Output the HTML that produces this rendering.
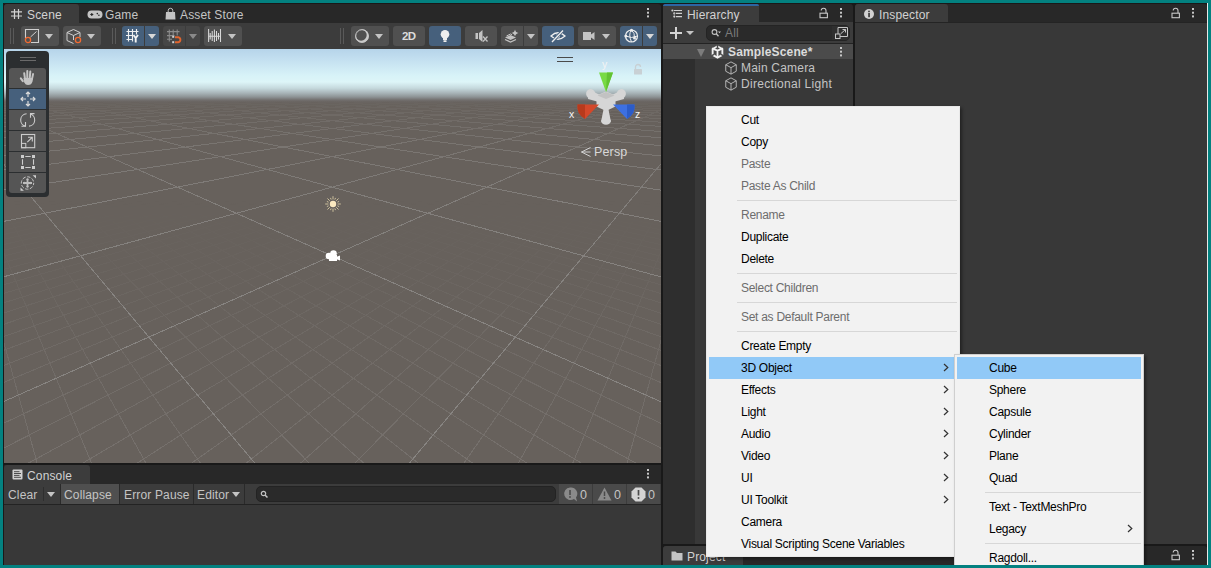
<!DOCTYPE html>
<html><head><meta charset="utf-8">
<style>
*{box-sizing:border-box;margin:0;padding:0}
html,body{width:1211px;height:568px;overflow:hidden;background:#038180;font-family:"Liberation Sans",sans-serif;font-size:12px;color:#c4c4c4}
.a{position:absolute}
svg{position:absolute;overflow:visible}
#ed{position:absolute;left:3px;top:3px;width:1205px;height:562px;background:#191919}
.hdr{position:absolute;background:#282828}
.tab{position:absolute;background:#3c3c3c;border-radius:3px 3px 0 0}
.tt{position:absolute;white-space:nowrap;line-height:14px;letter-spacing:0.15px}
.tb{position:absolute;background:#3c3c3c}
.btn{position:absolute;background:#505050;border-radius:3px}
.blue{background:#46607c}
.dd{position:absolute;width:0;height:0;border-left:4px solid transparent;border-right:4px solid transparent;border-top:5px solid #c4c4c4}
.mi{position:absolute;left:0;width:100%;height:22px;line-height:22px;padding-left:35px;color:#000;white-space:nowrap;font-size:12px;letter-spacing:-0.28px}
.mi.g{color:#6d6d6d}
.sep{position:absolute;height:1px;background:#d7d7d7}
.dots{position:absolute;width:2px;height:10px;background:radial-gradient(circle,#c4c4c4 0.9px,transparent 1.1px) 0 0/2px 4px repeat-y}
.pb{position:absolute;left:9px;width:37px;height:20px;background:#555555}
</style></head><body>
<div id="ed"></div>

<!-- ===== SCENE PANEL ===== -->
<div class="hdr" style="left:4px;top:4px;width:657px;height:19px;border-radius:3px 3px 0 0"></div>
<div class="tab" style="left:4px;top:4px;width:75px;height:19px"></div>
<svg style="left:11px;top:9px" width="11" height="10" viewBox="0 0 11 10"><path d="M3.5 0V10M7.5 0V10M0 2.8H11M0 7H11" stroke="#d2d2d2" stroke-width="1.2" fill="none"/></svg>
<div class="tt" style="left:27px;top:8px;color:#d2d2d2">Scene</div>
<svg style="left:88px;top:10px" width="14" height="9" viewBox="0 0 14 9"><path d="M3.5 0.5H10.5A3.8 3.8 0 0 1 10.5 8.5H3.5A3.8 3.8 0 0 1 3.5 0.5Z" fill="#c4c4c4"/><path d="M2.3 4.5H5.3M3.8 3V6" stroke="#282828" stroke-width="1.1"/><circle cx="9.3" cy="3.6" r="0.8" fill="#282828"/><circle cx="10.9" cy="5.3" r="0.8" fill="#282828"/></svg>
<div class="tt" style="left:105px;top:8px">Game</div>
<svg style="left:165px;top:8px" width="11" height="12" viewBox="0 0 11 12"><path d="M3.2 4.5V2.6A2.3 2.3 0 0 1 7.8 2.6V4.5" stroke="#c4c4c4" stroke-width="1" fill="none"/><path d="M1 4H10L10.5 11.5H0.5Z" fill="#c4c4c4"/></svg>
<div class="tt" style="left:180px;top:8px">Asset Store</div>
<svg style="left:647px;top:8.3px" width="2" height="10" viewBox="0 0 2 10"><rect x="0" y="0" width="2" height="2" fill="#c8c8c8"/><rect x="0" y="3.7" width="2" height="2" fill="#c8c8c8"/><rect x="0" y="7.4" width="2" height="2" fill="#c8c8c8"/></svg>

<div class="tb" style="left:4px;top:23px;width:657px;height:26px"></div>
<!-- left toolbar -->
<div class="a" style="left:10px;top:28px;width:1px;height:16px;background:#5a5a5a"></div>
<div class="a" style="left:13px;top:28px;width:1px;height:16px;background:#5a5a5a"></div>
<div class="btn" style="left:21px;top:26px;width:38px;height:20px"></div>
<svg style="left:24px;top:28px" width="18" height="18" viewBox="0 0 18 18"><path d="M1.5 10V1.5H14.5V14.5H7" stroke="#d0d0d0" stroke-width="1.1" fill="none"/><path d="M6.5 9L12.5 3.5" stroke="#d0d0d0" stroke-width="1"/><circle cx="4" cy="12" r="2.6" stroke="#f26b32" stroke-width="1.3" fill="none"/></svg>
<div class="dd" style="left:45px;top:34px"></div>
<div class="btn" style="left:63px;top:26px;width:38px;height:20px"></div>
<svg style="left:66px;top:28px" width="18" height="18" viewBox="0 0 18 18"><path d="M1 4.5L7.5 1.5L14 4.5V9M1 4.5V12.5L7.5 15.5M1 4.5L7.5 7.5L14 4.5M7.5 7.5V12" stroke="#d0d0d0" stroke-width="1" fill="none"/><circle cx="12" cy="12" r="2.6" stroke="#f26b32" stroke-width="1.3" fill="none"/></svg>
<div class="dd" style="left:87px;top:34px"></div>
<div class="a" style="left:112px;top:28px;width:1px;height:16px;background:#5a5a5a"></div>
<div class="a" style="left:115px;top:28px;width:1px;height:16px;background:#5a5a5a"></div>
<div class="btn blue" style="left:122px;top:26px;width:22px;height:20px;border-radius:3px 0 0 3px"></div>
<div class="btn blue" style="left:145px;top:26px;width:14px;height:20px;border-radius:0 3px 3px 0"></div>
<svg style="left:122px;top:26px" width="22" height="20" viewBox="0 0 22 20"><g stroke="#f0f0f0" stroke-width="1.15" fill="none"><path d="M6.5 3V15.5M10.5 3V15.5M14.5 3V8.5M4.5 5.5H16.5M4 9.5H10.5M4.5 13.5H11"/></g><path d="M11.5 9L13.7 12L16 9M13.7 12V16.5" stroke="#f4f4f4" stroke-width="1.9" fill="none"/></svg>
<div class="dd" style="left:148px;top:34px;border-top-color:#d8d8d8"></div>
<div class="btn" style="left:163px;top:26px;width:22px;height:20px;border-radius:3px 0 0 3px;background:#464646"></div>
<div class="btn" style="left:186px;top:26px;width:14px;height:20px;border-radius:0 3px 3px 0;background:#464646"></div>
<svg style="left:163px;top:26px" width="22" height="20" viewBox="0 0 22 20"><g stroke="#8c8c8c" stroke-width="1.05" fill="none"><path d="M6.3 3.5V15.5M10.2 3.5V9.5M14.2 3.5V9.5M4 5.6H16.5M4 9.6H11.5M4 13.2H9"/></g><rect x="9.2" y="9.8" width="2" height="2" fill="#d0d0d0"/><rect x="9.2" y="15.2" width="2" height="2" fill="#d0d0d0"/><path d="M12 11.2H15.3A2.6 2.6 0 0 1 15.3 16.3H12" stroke="#e0652f" stroke-width="1.9" fill="none"/></svg>
<div class="dd" style="left:189px;top:34px;border-top-color:#8a8a8a"></div>
<div class="btn" style="left:204px;top:26px;width:38px;height:20px"></div>
<svg style="left:204px;top:26px" width="22" height="20" viewBox="0 0 22 20"><g stroke="#d8d8d8" stroke-width="1.05" fill="none"><path d="M4.6 3V16M16.5 3V16M4.6 10.2H16.5M6.2 7V13.5M8.2 5V15M10.4 3.5V16M12.5 5V15M14.5 7V13.5"/></g></svg>
<div class="dd" style="left:228px;top:34px"></div>

<!-- right toolbar -->
<div class="a" style="left:340px;top:28px;width:1px;height:16px;background:#5a5a5a"></div>
<div class="a" style="left:343px;top:28px;width:1px;height:16px;background:#5a5a5a"></div>
<div class="btn" style="left:351px;top:26px;width:38px;height:20px"></div>
<svg style="left:354px;top:28px" width="16" height="16" viewBox="0 0 16 16"><circle cx="8" cy="8" r="6.8" fill="#cacaca"/><circle cx="7.1" cy="7.1" r="5.6" fill="#505050"/><circle cx="8" cy="8" r="6.3" stroke="#cacaca" stroke-width="1" fill="none"/></svg>
<div class="dd" style="left:375px;top:34px"></div>
<div class="btn" style="left:393px;top:26px;width:32px;height:20px"></div>
<div class="tt" style="left:402px;top:29px;font-weight:bold;font-size:11.5px;color:#dcdcdc;letter-spacing:-0.7px">2D</div>
<div class="btn blue" style="left:429px;top:26px;width:32px;height:20px"></div>
<svg style="left:439px;top:29px" width="12" height="14" viewBox="0 0 12 14"><circle cx="6" cy="5.3" r="4.3" fill="#eeeeee"/><rect x="4" y="8" width="4" height="3" fill="#eeeeee"/><rect x="4.3" y="11.3" width="3.4" height="1.8" rx="0.8" fill="#eeeeee"/></svg>
<div class="btn" style="left:465px;top:26px;width:32px;height:20px"></div>
<svg style="left:474px;top:29px" width="16" height="14" viewBox="0 0 16 14"><rect x="1.5" y="4" width="2.5" height="6" fill="#c4c4c4"/><path d="M5 4L8.5 1V13L5 10Z" fill="#c4c4c4"/><path d="M9 7.5L13.5 12.5M13.5 7.5L9 12.5" stroke="#c4c4c4" stroke-width="1.3"/></svg>
<div class="btn" style="left:501px;top:26px;width:22px;height:20px;border-radius:3px 0 0 3px"></div>
<div class="btn" style="left:524px;top:26px;width:14px;height:20px;border-radius:0 3px 3px 0"></div>
<svg style="left:504px;top:29px" width="16" height="14" viewBox="0 0 16 14"><path d="M1 8.5L6.5 6L12 8.5L6.5 11Z" fill="#c4c4c4"/><path d="M1 10.5L6.5 13L12 10.5" stroke="#c4c4c4" stroke-width="1.2" fill="none"/><path d="M2.5 7L6.5 5L8 5.7" stroke="#c4c4c4" stroke-width="1" fill="none"/><path d="M11 0.5Q11.5 3.5 14.5 4Q11.5 4.5 11 7.5Q10.5 4.5 7.5 4Q10.5 3.5 11 0.5Z" fill="#c4c4c4"/></svg>
<div class="dd" style="left:527px;top:34px"></div>
<div class="btn blue" style="left:542px;top:26px;width:32px;height:20px"></div>
<svg style="left:550px;top:29px" width="16" height="14" viewBox="0 0 16 14"><path d="M1 7Q8 0.5 15 7Q8 13.5 1 7Z" stroke="#eeeeee" stroke-width="1.3" fill="none"/><circle cx="8" cy="7" r="2" fill="#eeeeee"/><path d="M2 13.5L13 1" stroke="#46607c" stroke-width="3"/><path d="M2 13L13 1.5" stroke="#eeeeee" stroke-width="1.3"/></svg>
<div class="btn" style="left:578px;top:26px;width:38px;height:20px"></div>
<svg style="left:582px;top:31px" width="14" height="10" viewBox="0 0 14 10"><rect x="1" y="1" width="8" height="8" fill="#c4c4c4"/><path d="M9 3.5L12.5 1V9L9 6.5Z" fill="#c4c4c4"/></svg>
<div class="dd" style="left:602px;top:34px"></div>
<div class="btn blue" style="left:620px;top:26px;width:22px;height:20px;border-radius:3px 0 0 3px"></div>
<div class="btn blue" style="left:643px;top:26px;width:14px;height:20px;border-radius:0 3px 3px 0"></div>
<svg style="left:624px;top:28px" width="16" height="16" viewBox="0 0 16 16"><circle cx="7.5" cy="8" r="6" stroke="#eeeeee" stroke-width="1.2" fill="none"/><path d="M1.5 8Q7.5 11 13.5 8M7.5 2Q4 6 7.5 14M7.5 2Q11 5 10.5 10" stroke="#eeeeee" stroke-width="1" fill="none"/><circle cx="7.5" cy="2.3" r="1.5" fill="#eeeeee"/><circle cx="1.8" cy="8" r="1.5" fill="#eeeeee"/><circle cx="10.5" cy="10" r="1.5" fill="#eeeeee"/></svg>
<div class="dd" style="left:646px;top:34px;border-top-color:#d8d8d8"></div>

<!-- scene view -->
<div class="a" style="left:4px;top:49px;width:657px;height:414px;overflow:hidden;background:linear-gradient(to bottom,#b6d4ea 0px,#c4e0f0 11px,#d8f3f8 27px,#ddf5f8 33px,#c6dade 39px,#a8b4b8 44px,#8c9294 48px,#726f6e 51px,#68635f 53px,#67615c 59px)">
<svg style="left:-4px;top:-49px" width="665" height="512">
<defs><linearGradient id="fade" gradientUnits="userSpaceOnUse" x1="0" y1="100" x2="0" y2="300"><stop offset="0" stop-color="#fff" stop-opacity="0"/><stop offset="0.05" stop-color="#fff" stop-opacity="0.2"/><stop offset="0.2" stop-color="#fff" stop-opacity="0.55"/><stop offset="0.5" stop-color="#fff" stop-opacity="0.85"/><stop offset="1" stop-color="#fff" stop-opacity="1"/></linearGradient>
<linearGradient id="fade2" gradientUnits="userSpaceOnUse" x1="0" y1="200" x2="0" y2="463"><stop offset="0" stop-color="#fff" stop-opacity="0"/><stop offset="0.25" stop-color="#fff" stop-opacity="0.2"/><stop offset="0.55" stop-color="#fff" stop-opacity="0.6"/><stop offset="1" stop-color="#fff" stop-opacity="1"/></linearGradient>
<mask id="m" maskUnits="userSpaceOnUse" x="0" y="0" width="665" height="511"><rect x="0" y="0" width="665" height="511" fill="url(#fade)"/></mask>
<mask id="m2" maskUnits="userSpaceOnUse" x="0" y="0" width="665" height="511"><rect x="0" y="0" width="665" height="511" fill="url(#fade2)"/></mask></defs>
<path mask="url(#m2)" d="M37.1 463.0L4.0 343.0M627.2 463.0L661.0 340.4M91.5 463.0L4.0 253.0M572.8 463.0L661.0 251.3M145.9 463.0L4.0 208.6M518.4 463.0L661.0 207.3M200.3 463.0L4.0 182.2M464.0 463.0L661.0 181.1M254.7 463.0L4.0 164.6M409.5 463.0L661.0 163.8M309.2 463.0L4.0 152.1M355.1 463.0L661.0 151.4M363.6 463.0L7.0 145.4M300.7 463.0L657.3 145.4M418.0 463.0L15.5 144.6M246.3 463.0L648.8 144.6M472.4 463.0L23.9 143.8M191.8 463.0L640.4 143.8M526.9 463.0L32.0 143.0M137.4 463.0L632.2 143.0M581.3 463.0L40.0 142.3M83.0 463.0L624.3 142.3M635.7 463.0L47.8 141.6M28.6 463.0L616.5 141.6M661.0 448.2L55.4 140.9M4.0 447.9L608.8 140.9M661.0 423.4L62.9 140.2M4.0 423.1L601.4 140.2M661.0 401.8L70.2 139.5M4.0 401.4L594.1 139.5M661.0 382.6L77.3 138.8M4.0 382.3L586.9 138.8M661.0 365.6L84.3 138.2M4.0 365.4L580.0 138.2M661.0 350.4L91.2 137.5M4.0 350.2L573.1 137.5M661.0 336.8L97.9 136.9M4.0 336.5L566.4 136.9M661.0 324.4L104.4 136.3M4.0 324.2L559.9 136.3M661.0 313.2L110.8 135.7M4.0 312.9L553.4 135.7M661.0 302.9L117.1 135.1M4.0 302.7L547.1 135.1M661.0 293.5L123.3 134.5M4.0 293.3L541.0 134.5M661.0 284.8L129.3 134.0M4.0 284.6L534.9 134.0M661.0 276.9L135.3 133.4M4.0 276.7L529.0 133.4M661.0 269.5L141.1 132.9M4.0 269.3L523.2 132.9M661.0 262.6L146.8 132.3M4.0 262.4L517.5 132.3M661.0 256.2L152.4 131.8M4.0 256.0L511.9 131.8M661.0 250.3L157.9 131.3M4.0 250.1L506.4 131.3M661.0 244.7L163.2 130.8M4.0 244.5L501.0 130.8M661.0 239.4L168.5 130.3M4.0 239.3L495.7 130.3M661.0 234.5L173.7 129.8M4.0 234.4L490.6 129.8M661.0 229.9L178.8 129.3M4.0 229.8L485.5 129.3M661.0 225.6L183.8 128.9M4.0 225.4L480.5 128.9M661.0 221.4L188.7 128.4M4.0 221.3L475.6 128.4M661.0 217.6L193.5 128.0M4.0 217.4L470.7 128.0M661.0 213.9L198.3 127.5M4.0 213.7L466.0 127.5M661.0 210.4L202.9 127.1M4.0 210.2L461.3 127.1M661.0 207.0L207.5 126.7M4.0 206.9L456.8 126.7M661.0 203.9L212.0 126.3M4.0 203.8L452.3 126.3M661.0 200.9L216.4 125.8M4.0 200.8L447.8 125.8M661.0 198.0L220.8 125.4M4.0 197.9L443.5 125.4M661.0 195.3L225.1 125.0M4.0 195.2L439.2 125.0M661.0 192.7L229.3 124.6M4.0 192.5L435.0 124.6M661.0 190.2L233.4 124.3M4.0 190.0L430.9 124.3M661.0 187.8L237.5 123.9M4.0 187.6L426.8 123.9M661.0 185.5L241.5 123.5M4.0 185.4L422.8 123.5M661.0 183.3L245.4 123.1M4.0 183.2L418.9 123.1M661.0 181.1L249.3 122.8M4.0 181.0L415.0 122.8M661.0 179.1L253.1 122.4M4.0 179.0L411.2 122.4M661.0 177.2L256.9 122.1M4.0 177.1L407.4 122.1M661.0 175.3L260.6 121.7M4.0 175.2L403.7 121.7M661.0 173.5L264.2 121.4M4.0 173.4L400.1 121.4M661.0 171.7L267.8 121.1M4.0 171.6L396.5 121.1M661.0 170.0L271.3 120.7M4.0 170.0L393.0 120.7M661.0 168.4L274.8 120.4M4.0 168.3L389.5 120.4M661.0 166.9L278.2 120.1M4.0 166.8L386.1 120.1M661.0 165.3L281.6 119.8M4.0 165.3L382.7 119.8M661.0 163.9L284.9 119.5M4.0 163.8L379.4 119.5M661.0 162.5L288.2 119.2M4.0 162.4L376.1 119.2M661.0 161.1L291.4 118.9M4.0 161.0L372.9 118.9M661.0 159.8L294.6 118.6M4.0 159.7L369.7 118.6M661.0 158.5L297.7 118.3M4.0 158.4L366.6 118.3M661.0 157.2L300.8 118.0M4.0 157.2L363.5 118.0M661.0 156.0L303.9 117.7M4.0 156.0L360.4 117.7M661.0 154.9L306.9 117.4M4.0 154.8L357.4 117.4M661.0 153.7L309.8 117.1M4.0 153.7L354.4 117.1M661.0 152.6L312.8 116.9M4.0 152.6L351.5 116.9M661.0 151.6L315.6 116.6M4.0 151.5L348.6 116.6M661.0 150.5L318.5 116.3M4.0 150.4L345.8 116.3M661.0 149.5L321.3 116.1M4.0 149.4L343.0 116.1M661.0 148.5L324.1 115.8M4.0 148.4L340.2 115.8M661.0 147.6L326.8 115.6M4.0 147.5L337.5 115.6M661.0 146.6L329.5 115.3M4.0 146.6L334.8 115.3M661.0 145.7L332.1 115.1M4.0 145.6L332.1 115.1" stroke="#76716d" stroke-width="1" fill="none" shape-rendering="crispEdges"/>
<path mask="url(#m)" d="M254.7 463.0L4.0 164.6M409.5 463.0L661.0 163.8M661.0 401.8L4.0 110.1M4.0 401.4L661.0 109.8M661.0 276.9L4.0 97.6M4.0 276.7L661.0 97.4M661.0 221.4L4.0 92.0M4.0 221.3L661.0 91.9M661.0 190.2L10.8 90.0M4.0 190.0L653.5 90.0M661.0 170.0L26.1 89.7M4.0 170.0L638.2 89.7M661.0 156.0L40.7 89.4M4.0 156.0L623.5 89.4M661.0 145.7L54.8 89.2M4.0 145.6L609.5 89.2M661.0 137.8L68.3 89.0M4.0 137.7L595.9 89.0M661.0 131.5L81.3 88.7M4.0 131.5L582.9 88.7M661.0 126.4L93.8 88.5M4.0 126.4L570.5 88.5M661.0 122.2L105.8 88.3M4.0 122.2L558.4 88.3M661.0 118.7L117.4 88.1M4.0 118.7L546.9 88.1M661.0 115.7L128.6 87.9M4.0 115.6L535.7 87.9M661.0 113.1L139.4 87.8M4.0 113.0L524.9 87.8M661.0 110.8L149.7 87.6M4.0 110.8L514.5 87.6M661.0 108.8L159.8 87.4M4.0 108.8L504.5 87.4M661.0 107.0L169.5 87.2M4.0 107.0L494.8 87.2M661.0 105.5L178.8 87.1M4.0 105.4L485.5 87.1M661.0 104.0L187.9 86.9M4.0 104.0L476.4 86.9M661.0 102.8L196.7 86.8M4.0 102.7L467.6 86.8M661.0 101.6L205.2 86.6M4.0 101.6L459.1 86.6M661.0 100.5L213.4 86.5M4.0 100.5L450.9 86.5M661.0 99.6L221.4 86.4M4.0 99.5L442.9 86.4M661.0 98.7L229.1 86.2M4.0 98.6L435.2 86.2M661.0 97.8L236.6 86.1M4.0 97.8L427.7 86.1M661.0 97.1L243.9 86.0M4.0 97.1L420.4 86.0M661.0 96.4L251.0 85.9M4.0 96.4L413.3 85.9M661.0 95.7L257.8 85.7M4.0 95.7L406.4 85.7M661.0 95.1L264.5 85.6M4.0 95.1L399.8 85.6M661.0 94.5L271.0 85.5M4.0 94.5L393.3 85.5M661.0 94.0L277.3 85.4M4.0 94.0L387.0 85.4M661.0 93.5L283.5 85.3M4.0 93.5L380.8 85.3M661.0 93.0L289.5 85.2M4.0 93.0L374.8 85.2M661.0 92.6L295.3 85.1M4.0 92.6L369.0 85.1M661.0 92.2L301.0 85.0M4.0 92.2L363.3 85.0M661.0 91.8L306.5 84.9M4.0 91.8L357.8 84.9M661.0 91.4L311.9 84.8M4.0 91.4L352.4 84.8M661.0 91.0L317.1 84.7M4.0 91.0L347.1 84.7M661.0 90.7L322.3 84.6M4.0 90.7L342.0 84.6M661.0 90.4L327.3 84.6M4.0 90.4L337.0 84.6M661.0 90.1L332.1 84.5M4.0 90.1L332.1 84.5" stroke="#878481" stroke-width="1" fill="none" shape-rendering="crispEdges"/>
</svg>
<!-- tool palette -->
<div class="a" style="left:2px;top:2px;width:43px;height:146px;background:#2b2e30;border-radius:4px"></div>
<div class="a" style="left:16px;top:8px;width:16px;height:1px;background:#6a6a6a"></div>
<div class="a" style="left:16px;top:11px;width:16px;height:1px;background:#6a6a6a"></div>
</div>

<!-- tool palette buttons (absolute page coords) -->
<div class="pb" style="top:68px;border-radius:3px 3px 0 0"></div>
<div class="pb" style="top:89px;background:#46607c"></div>
<div class="pb" style="top:110px"></div>
<div class="pb" style="top:131px"></div>
<div class="pb" style="top:152px"></div>
<div class="pb" style="top:173px;border-radius:0 0 3px 3px"></div>
<svg style="left:20px;top:69px" width="16" height="17" viewBox="0 0 16 17"><g fill="#c4c4c4"><rect x="3.6" y="3.2" width="2" height="8" rx="1" transform="rotate(-8 4.6 7)"/><rect x="6.3" y="1" width="2" height="9" rx="1"/><rect x="9" y="1.6" width="2" height="9" rx="1" transform="rotate(5 10 6)"/><rect x="11.5" y="4" width="1.9" height="7.5" rx="0.95" transform="rotate(12 12.4 8)"/><rect x="0.8" y="8" width="2" height="5.5" rx="1" transform="rotate(-35 1.8 10.7)"/><path d="M3.5 9H13L12.5 12.5Q11.5 16 8 16Q5.5 16 4.2 13.5Z"/></g></svg>
<svg style="left:19px;top:90px" width="18" height="18" viewBox="0 0 18 18"><path d="M9 2V7M9 11V16M2 9H7M11 9H16M7 4L9 2L11 4M7 14L9 16L11 14M4 7L2 9L4 11M14 7L16 9L14 11" stroke="#dcdcdc" stroke-width="1.2" fill="none"/></svg>
<svg style="left:20px;top:112px" width="16" height="16" viewBox="0 0 16 16"><path d="M6.6 1.8A6.2 6.2 0 0 0 5.8 14.1M9 14.1A6.2 6.2 0 0 0 10 1.9" stroke="#cccccc" stroke-width="1.1" fill="none"/><path d="M5.5 10V14.2H1.5M10.5 5.8V1.6H14.5" stroke="#cccccc" stroke-width="1.1" fill="none"/></svg>
<svg style="left:20px;top:133px" width="16" height="16" viewBox="0 0 16 16"><rect x="1.5" y="1.5" width="13.2" height="13.2" stroke="#cccccc" stroke-width="1.1" fill="none"/><rect x="1.5" y="10.4" width="4.3" height="4.3" stroke="#cccccc" stroke-width="1" fill="none"/><path d="M7.3 9.2L12 4.5M8 4.2H12.3V8.5" stroke="#cccccc" stroke-width="1.1" fill="none"/></svg>
<svg style="left:20px;top:154px" width="16" height="16" viewBox="0 0 16 16"><path d="M2.5 5.3V10.7M13.5 5.3V10.7M5.3 2.5H10.7M5.3 13.5H10.7" stroke="#cccccc" stroke-width="1.1"/><rect x="1" y="1" width="3" height="3" fill="#cccccc"/><rect x="12" y="1" width="3" height="3" fill="#cccccc"/><rect x="1" y="12" width="3" height="3" fill="#cccccc"/><rect x="12" y="12" width="3" height="3" fill="#cccccc"/></svg>
<svg style="left:20px;top:175px" width="17" height="17" viewBox="0 0 17 17"><circle cx="7.5" cy="8" r="6.2" stroke="#c4c4c4" stroke-width="1" fill="none" stroke-dasharray="3.4 1.47" stroke-dashoffset="1.2"/><path d="M7.5 3.5V12.5M3 8H12" stroke="#bdbdbd" stroke-width="1.8"/><path d="M6 5L7.5 3.3L9 5ZM6 11L7.5 12.7L9 11ZM4.5 6.5L2.8 8L4.5 9.5ZM10.5 6.5L12.2 8L10.5 9.5Z" fill="#bdbdbd"/><path d="M16 0.2V3.6L12.6 0.2Z" fill="#d0d0d0"/><path d="M0.5 15.8V12.4L3.9 15.8Z" fill="#d0d0d0"/></svg>

<!-- gizmo -->
<div class="a" style="left:557px;top:57px;width:16px;height:1px;background:#4a4a4a"></div>
<div class="a" style="left:557px;top:61px;width:16px;height:1px;background:#4a4a4a"></div>
<svg style="left:633px;top:64px" width="10" height="11" viewBox="0 0 10 11"><path d="M2.5 5V3A2.5 2.5 0 0 1 7.5 3" stroke="#c8d0d4" stroke-width="1.3" fill="none"/><rect x="1" y="5" width="8" height="5.5" rx="0.5" fill="#c8d0d4"/></svg>
<svg style="left:570px;top:60px" width="72" height="70" viewBox="570 60 72 70">
 <text x="604.5" y="67.5" font-size="10.5" fill="#f4f4f4" text-anchor="middle" font-family="Liberation Sans">y</text>
 <text x="571.5" y="117.5" font-size="10.5" fill="#f4f4f4" text-anchor="middle" font-family="Liberation Sans">x</text>
 <text x="637.5" y="117.5" font-size="10.5" fill="#f4f4f4" text-anchor="middle" font-family="Liberation Sans">z</text>
 <g fill="#d6d6d6">
 <ellipse cx="590.8" cy="94" rx="4.6" ry="5" transform="rotate(-30 590.8 94)"/>
 <path d="M589 89.5L600 95L599 102L588 99Z"/>
 <ellipse cx="621.2" cy="94" rx="4.6" ry="5" transform="rotate(30 621.2 94)"/>
 <path d="M623 89.5L612 95L613 102L624 99Z"/>
 <ellipse cx="606" cy="121.3" rx="4.8" ry="3.4"/>
 <path d="M604 107H608L610.8 121H601.2Z"/>
 <path d="M606 91.5L615.5 95.5V106.5L606 111L596.5 106.5V95.5Z"/>
 </g>
 <path d="M597.5 95.5L606 92L614.5 95.5L606 99Z" fill="#c2c2c2"/>
 <path d="M599 72.5H613L606 92Z" fill="#78da44"/>
 <path d="M607 72.5H613L606 92Z" fill="#62c232"/>
 <path d="M577.5 104.5H599L585 119Q576.5 114 577.5 104.5Z" fill="#d4482a"/>
 <path d="M577.5 104.5H585L585 119Q576.5 114 577.5 104.5Z" fill="#b83a1c"/>
 <path d="M613 104.5H634.5Q635.5 114 627 119Z" fill="#3d70e2"/>
 <path d="M627 104.5H634.5Q635.5 114 627 119Z" fill="#2c5cc8"/>
</svg>
<svg style="left:580px;top:146px" width="12" height="12" viewBox="0 0 12 12"><path d="M10.5 1.5L1.5 6L10.5 10.5M1.5 6H10.5" stroke="#d0d0d0" stroke-width="1" fill="none"/></svg>
<div class="tt" style="left:594px;top:145px;font-size:12.5px;color:#d8d8d8">Persp</div>

<!-- sun & camera -->
<svg style="left:324px;top:195px" width="18" height="18" viewBox="0 0 18 18"><circle cx="9" cy="9" r="3.2" fill="#fbe9bf"/><path d="M13.60 9.00L16.80 9.00M13.43 10.84L15.10 11.53M12.25 12.25L14.52 14.52M10.84 13.43L11.53 15.10M9.00 13.60L9.00 16.80M7.16 13.43L6.47 15.10M5.75 12.25L3.48 14.52M4.57 10.84L2.90 11.53M4.40 9.00L1.20 9.00M4.57 7.16L2.90 6.47M5.75 5.75L3.48 3.48M7.16 4.57L6.47 2.90M9.00 4.40L9.00 1.20M10.84 4.57L11.53 2.90M12.25 5.75L14.52 3.48M13.43 7.16L15.10 6.47" stroke="#d8cba4" stroke-width="0.9"/></svg>
<svg style="left:325px;top:249px" width="16" height="13" viewBox="0 0 16 13"><circle cx="4" cy="7" r="3.3" fill="#fff"/><circle cx="8.5" cy="4.5" r="3.3" fill="#fff"/><rect x="4" y="6" width="8" height="6" fill="#fff"/><path d="M11 8L15 6.5V11.5L11 10Z" fill="#fff"/></svg>

<!-- ===== CONSOLE ===== -->
<div class="hdr" style="left:4px;top:465px;width:657px;height:19px"></div>
<div class="tab" style="left:4px;top:465px;width:86px;height:19px"></div>
<svg style="left:12px;top:469px" width="11" height="11" viewBox="0 0 11 11"><rect x="0.5" y="0.5" width="10" height="10" rx="1" fill="#d2d2d2"/><path d="M2 2.7H7.5M2 4.5H9M2 6.4H7.5M2 8.3H9" stroke="#3c3c3c" stroke-width="0.9"/></svg>
<div class="tt" style="left:27px;top:469px;color:#d2d2d2">Console</div>
<svg style="left:647px;top:469.3px" width="2" height="10" viewBox="0 0 2 10"><rect x="0" y="0" width="2" height="2" fill="#c8c8c8"/><rect x="0" y="3.7" width="2" height="2" fill="#c8c8c8"/><rect x="0" y="7.4" width="2" height="2" fill="#c8c8c8"/></svg>
<div class="tb" style="left:4px;top:484px;width:657px;height:20px"></div>
<div class="tt" style="left:8px;top:488px">Clear</div>
<div class="a" style="left:43px;top:487px;width:1px;height:14px;background:#2e2e2e"></div>
<div class="dd" style="left:47px;top:492px;border-left-width:4px;border-right-width:4px"></div>
<div class="a" style="left:60px;top:484px;width:1px;height:20px;background:#2a2a2a"></div>
<div class="a" style="left:61px;top:484px;width:58px;height:20px;background:#4f4f4f"></div>
<div class="tt" style="left:64px;top:488px">Collapse</div>
<div class="a" style="left:119px;top:484px;width:1px;height:20px;background:#2a2a2a"></div>
<div class="tt" style="left:124px;top:488px">Error Pause</div>
<div class="a" style="left:193px;top:484px;width:1px;height:20px;background:#2a2a2a"></div>
<div class="tt" style="left:197px;top:488px">Editor</div>
<div class="dd" style="left:232px;top:492px"></div>
<div class="a" style="left:244px;top:484px;width:1px;height:20px;background:#2a2a2a"></div>
<div class="a" style="left:256px;top:486px;width:300px;height:16px;background:#2a2a2a;border:1px solid #232323;border-radius:5px"></div>
<svg style="left:260px;top:490px" width="9" height="9" viewBox="0 0 9 9"><circle cx="3.5" cy="3.5" r="2.2" stroke="#c4c4c4" stroke-width="1.2" fill="none"/><path d="M5 5L7.5 7.5" stroke="#c4c4c4" stroke-width="1.5"/></svg>
<div class="a" style="left:559px;top:484px;width:33px;height:20px;background:#4a4a4a"></div>
<div class="a" style="left:593px;top:484px;width:33px;height:20px;background:#4a4a4a"></div>
<div class="a" style="left:627px;top:484px;width:33px;height:20px;background:#4a4a4a"></div>
<svg style="left:563px;top:487px" width="15" height="15" viewBox="0 0 15 15"><path d="M7 0.5A6.3 6.3 0 1 0 11 12L14 14.5L13 10.5A6.3 6.3 0 0 0 7 0.5Z" fill="#8a8a8a"/><path d="M7 3V8" stroke="#4a4a4a" stroke-width="1.6"/><circle cx="7" cy="10" r="0.9" fill="#4a4a4a"/></svg>
<div class="tt" style="left:580px;top:488px;font-size:12.5px">0</div>
<svg style="left:597px;top:487px" width="15" height="14" viewBox="0 0 15 14"><path d="M7.5 0.5L14.5 13.5H0.5Z" fill="#8a8a8a"/><path d="M7.5 4.5V9" stroke="#4a4a4a" stroke-width="1.5"/><circle cx="7.5" cy="11" r="0.9" fill="#4a4a4a"/></svg>
<div class="tt" style="left:614px;top:488px;font-size:12.5px">0</div>
<svg style="left:631px;top:487px" width="15" height="15" viewBox="0 0 15 15"><path d="M4.5 0.5H10.5L14.5 4.5V10.5L10.5 14.5H4.5L0.5 10.5V4.5Z" fill="#d4d4d4"/><path d="M7.5 3V8.5" stroke="#4a4a4a" stroke-width="1.7"/><circle cx="7.5" cy="11" r="1" fill="#4a4a4a"/></svg>
<div class="tt" style="left:648px;top:488px;font-size:12.5px">0</div>
<div class="a" style="left:4px;top:504px;width:657px;height:1px;background:#232323"></div>
<div class="a" style="left:4px;top:505px;width:657px;height:60px;background:#383838"></div>

<!-- ===== HIERARCHY ===== -->
<div class="hdr" style="left:663px;top:4px;width:190px;height:18px;border-radius:3px 3px 0 0"></div>
<div class="tab" style="left:663px;top:4px;width:96px;height:18px"></div>
<div class="a" style="left:663px;top:4px;width:96px;height:2px;background:#2d66a3;border-radius:3px 3px 0 0"></div>
<svg style="left:670px;top:8px" width="14" height="11" viewBox="0 0 14 11"><path d="M4 2.5H12M6 5.45H12M6 8.55H12" stroke="#d0d0d0" stroke-width="1.2"/><circle cx="2.4" cy="2.5" r="1.1" fill="#d0d0d0"/><circle cx="4.3" cy="5.45" r="1.1" fill="#d0d0d0"/><circle cx="4.3" cy="8.55" r="1.1" fill="#d0d0d0"/><path d="M4.3 3.8V8" stroke="#9a9a9a" stroke-width="0.6"/></svg>
<div class="tt" style="left:687px;top:8px;color:#d2d2d2">Hierarchy</div>
<svg style="left:818.5px;top:7px" width="10" height="11" viewBox="0 0 10 11"><path d="M7 6V3.6A2.4 2.4 0 0 0 2.2 3.6" stroke="#c8c8c8" stroke-width="1.1" fill="none"/><rect x="1" y="6.2" width="7.4" height="4.5" stroke="#c8c8c8" stroke-width="1.1" fill="none"/></svg>
<svg style="left:840px;top:8.3px" width="2" height="10" viewBox="0 0 2 10"><rect x="0" y="0" width="2" height="2" fill="#c8c8c8"/><rect x="0" y="3.7" width="2" height="2" fill="#c8c8c8"/><rect x="0" y="7.4" width="2" height="2" fill="#c8c8c8"/></svg>
<div class="tb" style="left:663px;top:22px;width:190px;height:21px"></div>
<svg style="left:669px;top:26px" width="14" height="14" viewBox="0 0 14 14"><path d="M7 1V13M1 7H13" stroke="#d4d4d4" stroke-width="2"/></svg>
<div class="dd" style="left:686px;top:31px;border-top-width:4.5px"></div>
<div class="a" style="left:706px;top:25px;width:144px;height:16px;background:#2a2a2a;border:1px solid #242424;border-radius:5px"></div>
<div class="a" style="left:832px;top:26px;width:17px;height:14px;background:#2f2f2f;border-radius:0 4px 4px 0"></div>
<svg style="left:711px;top:28px" width="10" height="10" viewBox="0 0 10 10"><circle cx="3.5" cy="4" r="2.4" stroke="#c4c4c4" stroke-width="1.1" fill="none"/><path d="M5.2 5.8L7.5 8.3" stroke="#c4c4c4" stroke-width="1.3"/><path d="M7 3.5H10L8.5 5.2Z" fill="#c4c4c4"/></svg>
<div class="tt" style="left:725px;top:26px;color:#7a7a7a">All</div>
<svg style="left:835px;top:27px" width="13" height="12" viewBox="0 0 13 12"><rect x="0.5" y="7" width="4.5" height="4.5" stroke="#c4c4c4" stroke-width="1" fill="none"/><path d="M3 7V0.5H12.5V9.5H5" stroke="#c4c4c4" stroke-width="1" fill="none"/><path d="M6 6.5L10.5 2.5M7.5 2.5H10.5V5.5" stroke="#c4c4c4" stroke-width="1" fill="none"/></svg>
<div class="a" style="left:663px;top:43px;width:190px;height:1px;background:#232323"></div>
<div class="a" style="left:663px;top:44px;width:190px;height:500px;background:#383838"></div>
<div class="a" style="left:663px;top:59px;width:32px;height:485px;background:#2e2e2e"></div>
<div class="a" style="left:663px;top:44px;width:190px;height:15px;background:#4b4b4b"></div>
<div class="a" style="left:697px;top:49px;width:0;height:0;border-left:4.5px solid transparent;border-right:4.5px solid transparent;border-top:8px solid #7c7c7c"></div>
<svg style="left:710.5px;top:44.8px" width="13" height="14" viewBox="0 0 13 14"><path d="M6.5 0.3L12.3 3.6V10.4L6.5 13.7L0.7 10.4V3.6Z" fill="#f2f2f2"/><path d="M6.5 2.2L10.4 4.5V9.3L6.5 11.6L2.6 9.3V4.5Z" fill="#4b4b4b"/><path d="M6.5 5.6V13M6.5 5.6L1.2 3.4M6.5 5.6L11.8 3.4" stroke="#f2f2f2" stroke-width="1.8"/><path d="M6.5 0V3.2M0.4 10.8L3 9.3M12.6 10.8L10 9.3" stroke="#4b4b4b" stroke-width="1.5"/></svg>
<div class="tt" style="left:728px;top:45px;font-weight:bold;color:#dcdcdc;letter-spacing:0.15px">SampleScene*</div>
<svg style="left:840px;top:47.3px" width="2" height="10" viewBox="0 0 2 10"><rect x="0" y="0" width="2" height="2" fill="#c8c8c8"/><rect x="0" y="3.7" width="2" height="2" fill="#c8c8c8"/><rect x="0" y="7.4" width="2" height="2" fill="#c8c8c8"/></svg>
<svg style="left:723.5px;top:61px" width="14" height="14" viewBox="0 0 15 16"><path d="M7.5 1L13.5 4.3V11.7L7.5 15L1.5 11.7V4.3ZM1.5 4.3L7.5 7.6L13.5 4.3M7.5 7.6V15" stroke="#c4c4c4" stroke-width="1" fill="none"/></svg>
<div class="tt" style="left:741px;top:61px;letter-spacing:0.2px">Main Camera</div>
<svg style="left:723.5px;top:77px" width="14" height="14" viewBox="0 0 15 16"><path d="M7.5 1L13.5 4.3V11.7L7.5 15L1.5 11.7V4.3ZM1.5 4.3L7.5 7.6L13.5 4.3M7.5 7.6V15" stroke="#c4c4c4" stroke-width="1" fill="none"/></svg>
<div class="tt" style="left:741px;top:77px;letter-spacing:0.3px">Directional Light</div>

<!-- ===== INSPECTOR ===== -->
<div class="hdr" style="left:855px;top:4px;width:352px;height:19px;border-radius:3px 3px 0 0"></div>
<div class="tab" style="left:855px;top:4px;width:93px;height:19px"></div>
<svg style="left:864px;top:9px" width="10" height="10" viewBox="0 0 10 10"><circle cx="5" cy="5" r="5" fill="#d2d2d2"/><rect x="4.2" y="4" width="1.7" height="4.2" fill="#3c3c3c"/><circle cx="5" cy="2.4" r="0.9" fill="#3c3c3c"/></svg>
<div class="tt" style="left:879px;top:8px;color:#d2d2d2">Inspector</div>
<svg style="left:1171px;top:7px" width="10" height="11" viewBox="0 0 10 11"><path d="M7 6V3.6A2.4 2.4 0 0 0 2.2 3.6" stroke="#c8c8c8" stroke-width="1.1" fill="none"/><rect x="1" y="6.2" width="7.4" height="4.5" stroke="#c8c8c8" stroke-width="1.1" fill="none"/></svg>
<svg style="left:1192px;top:8.3px" width="2" height="10" viewBox="0 0 2 10"><rect x="0" y="0" width="2" height="2" fill="#c8c8c8"/><rect x="0" y="3.7" width="2" height="2" fill="#c8c8c8"/><rect x="0" y="7.4" width="2" height="2" fill="#c8c8c8"/></svg>
<div class="a" style="left:855px;top:23px;width:352px;height:521px;background:#383838"></div>
<div class="a" style="left:855px;top:22px;width:352px;height:1px;background:#242424"></div>

<!-- ===== BOTTOM RIGHT ===== -->
<div class="hdr" style="left:663px;top:546px;width:544px;height:19px;border-radius:3px 3px 0 0"></div>
<div class="tab" style="left:663px;top:546px;width:80px;height:19px"></div>
<svg style="left:671px;top:551px" width="12" height="10" viewBox="0 0 12 10"><path d="M0.5 0.5H4.5L6 2H11.5V9.5H0.5Z" fill="#c4c4c4"/></svg>
<div class="tt" style="left:687px;top:550px;color:#d2d2d2">Project</div>
<svg style="left:1171px;top:549px" width="10" height="11" viewBox="0 0 10 11"><path d="M7 6V3.6A2.4 2.4 0 0 0 2.2 3.6" stroke="#c8c8c8" stroke-width="1.1" fill="none"/><rect x="1" y="6.2" width="7.4" height="4.5" stroke="#c8c8c8" stroke-width="1.1" fill="none"/></svg>
<svg style="left:1192px;top:550.3px" width="2" height="10" viewBox="0 0 2 10"><rect x="0" y="0" width="2" height="2" fill="#c8c8c8"/><rect x="0" y="3.7" width="2" height="2" fill="#c8c8c8"/><rect x="0" y="7.4" width="2" height="2" fill="#c8c8c8"/></svg>
<div class="a" style="left:1207px;top:3px;width:1px;height:562px;background:#e8e8e8"></div>

<!-- ===== CONTEXT MENU ===== -->
<div class="a" style="left:706px;top:106px;width:254px;height:451px;background:#f2f2f2;border:1px solid #e8e8e8;box-shadow:2px 2px 3px rgba(0,0,0,0.4)"></div>
<div class="a" style="left:706px;top:106px;width:254px;height:451px">
 <div class="mi" style="top:3px">Cut</div>
 <div class="mi" style="top:25px">Copy</div>
 <div class="mi g" style="top:47px">Paste</div>
 <div class="mi g" style="top:69px">Paste As Child</div>
 <div class="sep" style="top:94px;left:31px;width:220px"></div>
 <div class="mi g" style="top:98px">Rename</div>
 <div class="mi" style="top:120px">Duplicate</div>
 <div class="mi" style="top:142px">Delete</div>
 <div class="sep" style="top:167px;left:31px;width:220px"></div>
 <div class="mi g" style="top:171px">Select Children</div>
 <div class="sep" style="top:196px;left:31px;width:220px"></div>
 <div class="mi g" style="top:200px">Set as Default Parent</div>
 <div class="sep" style="top:225px;left:31px;width:220px"></div>
 <div class="mi" style="top:229px">Create Empty</div>
 <div class="a" style="left:3px;top:251px;width:248px;height:22px;background:#91c9f7"></div>
 <div class="mi" style="top:251px">3D Object</div>
 <div class="mi" style="top:273px">Effects</div>
 <div class="mi" style="top:295px">Light</div>
 <div class="mi" style="top:317px">Audio</div>
 <div class="mi" style="top:339px">Video</div>
 <div class="mi" style="top:361px">UI</div>
 <div class="mi" style="top:383px">UI Toolkit</div>
 <div class="mi" style="top:405px">Camera</div>
 <div class="mi" style="top:427px">Visual Scripting Scene Variables</div>
 <svg style="left:237px;top:257px" width="6" height="9" viewBox="0 0 6 9"><path d="M1 1L4.8 4.5L1 8" stroke="#333" stroke-width="1.2" fill="none"/></svg>
 <svg style="left:237px;top:279px" width="6" height="9" viewBox="0 0 6 9"><path d="M1 1L4.8 4.5L1 8" stroke="#333" stroke-width="1.2" fill="none"/></svg>
 <svg style="left:237px;top:301px" width="6" height="9" viewBox="0 0 6 9"><path d="M1 1L4.8 4.5L1 8" stroke="#333" stroke-width="1.2" fill="none"/></svg>
 <svg style="left:237px;top:323px" width="6" height="9" viewBox="0 0 6 9"><path d="M1 1L4.8 4.5L1 8" stroke="#333" stroke-width="1.2" fill="none"/></svg>
 <svg style="left:237px;top:345px" width="6" height="9" viewBox="0 0 6 9"><path d="M1 1L4.8 4.5L1 8" stroke="#333" stroke-width="1.2" fill="none"/></svg>
 <svg style="left:237px;top:367px" width="6" height="9" viewBox="0 0 6 9"><path d="M1 1L4.8 4.5L1 8" stroke="#333" stroke-width="1.2" fill="none"/></svg>
 <svg style="left:237px;top:389px" width="6" height="9" viewBox="0 0 6 9"><path d="M1 1L4.8 4.5L1 8" stroke="#333" stroke-width="1.2" fill="none"/></svg>
</div>

<!-- ===== SUBMENU ===== -->
<div class="a" style="left:954px;top:354px;width:190px;height:220px;background:#f2f2f2;border:1px solid #cfcfcf;box-shadow:2px 2px 3px rgba(0,0,0,0.4)"></div>
<div class="a" style="left:954px;top:354px;width:190px;height:211px;overflow:hidden">
 <div class="a" style="left:3px;top:3px;width:184px;height:22px;background:#91c9f7"></div>
 <div class="mi" style="top:3px">Cube</div>
 <div class="mi" style="top:25px">Sphere</div>
 <div class="mi" style="top:47px">Capsule</div>
 <div class="mi" style="top:69px">Cylinder</div>
 <div class="mi" style="top:91px">Plane</div>
 <div class="mi" style="top:113px">Quad</div>
 <div class="sep" style="top:138px;left:31px;width:156px"></div>
 <div class="mi" style="top:142px">Text - TextMeshPro</div>
 <div class="mi" style="top:164px">Legacy</div>
 <div class="sep" style="top:189px;left:31px;width:156px"></div>
 <div class="mi" style="top:193px">Ragdoll...</div>
 <svg style="left:173px;top:170px" width="6" height="9" viewBox="0 0 6 9"><path d="M1 1L4.8 4.5L1 8" stroke="#333" stroke-width="1.2" fill="none"/></svg>
</div>
<div class="a" style="left:0;top:565px;width:1211px;height:3px;background:#038180"></div>
</body></html>
